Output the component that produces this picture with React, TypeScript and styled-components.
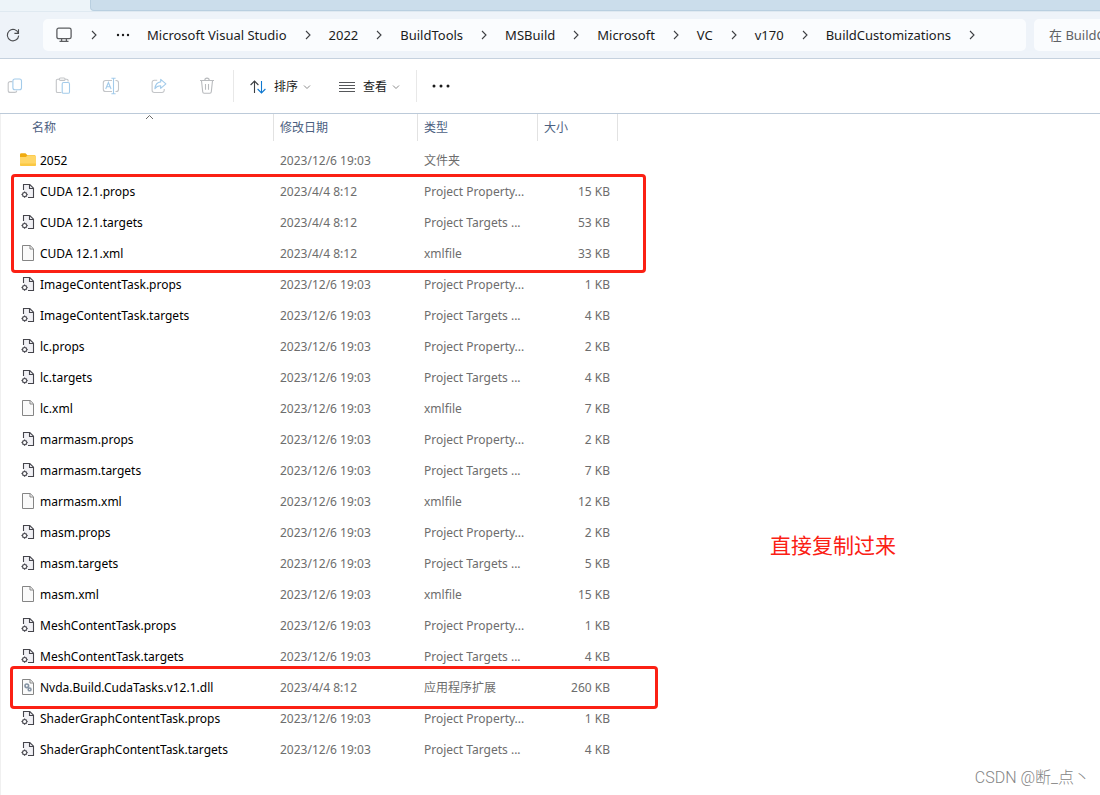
import React from "react";
import styled, { createGlobalStyle } from "styled-components";

const GlobalStyle = createGlobalStyle`
  * { box-sizing: border-box; }
  body {
    margin: 0;
    background: #fff;
    color: #1b1b1b;
    font-family: "Noto Sans", "Noto Sans CJK SC", sans-serif;
    font-size: 13px;
    overflow-x: hidden;
  }
  button, input { font: inherit; color: inherit; }
`;

const Window = styled.div`
  display: flex;
  flex-direction: column;
  min-height: 100vh;
`;

const TabStrip = styled.div`
  display: flex;
  height: 12px;
  background: #edf4f9;
  border-bottom: 1px solid #dfe9f1;
`;

const ActiveTab = styled.div`
  flex: 0 0 90px;
`;

const InactiveTabs = styled.div`
  flex: 1;
  border: 1px solid #b9cfe0;
  border-width: 0 0 1px 1px;
  border-bottom-left-radius: 4px;
  background: #cbddeb;
`;

const NavBar = styled.nav`
  display: flex;
  align-items: center;
  height: 47px;
  background: #eef3f9;
  border-bottom: 1px solid #c5d1de;
`;

const RefreshButton = styled.button`
  display: flex;
  flex: 0 0 43px;
  padding: 0 0 0 5px;
  border: 0;
  background: none;
`;

const AddressBar = styled.ol`
  display: flex;
  flex: 1;
  align-items: center;
  min-width: 0;
  height: 32px;
  margin: 0 8px 0 0;
  padding: 0 0 0 12px;
  border-radius: 5px;
  background: #fafcfe;
  list-style: none;
  overflow: hidden;
`;

const Crumb = styled.li`
  display: flex;
  flex: none;
  align-items: center;
`;

const CrumbLink = styled.a`
  color: inherit;
  line-height: 20px;
  text-decoration: none;
  white-space: nowrap;
`;

const CrumbIcon = styled.button`
  display: flex;
  padding: 0;
  border: 0;
  background: none;
`;

const MoreButton = styled(CrumbIcon)`
  margin-right: 15px;
`;

const CrumbChevron = styled.span<{ $width: number }>`
  display: flex;
  justify-content: center;
  width: ${(p) => p.$width}px;
`;

const SearchBox = styled.input`
  flex: 0 0 66px;
  width: 66px;
  height: 32px;
  padding: 0 0 0 15px;
  border: 0;
  border-radius: 5px 0 0 5px;
  background: #fafcfe;
  outline: 0;
  &::placeholder { color: #5f6266; opacity: 1; }
`;

const Toolbar = styled.div`
  display: flex;
  align-items: center;
  height: 55px;
  border-bottom: 1px solid #bccad9;
`;

const IconTools = styled.div`
  display: flex;
  align-items: center;
  gap: 18px;
  margin-right: 11px;
`;

const IconButton = styled.button<{ $width?: number }>`
  display: flex;
  justify-content: center;
  width: ${(p) => p.$width ?? 30}px;
  padding: 0;
  border: 0;
  background: none;
`;

const MenuButton = styled.button`
  display: flex;
  align-items: center;
  padding: 0 14px;
  border: 0;
  background: none;
  font-size: 12px;
  line-height: 20px;
`;

const MenuLabel = styled.span`
  margin: 0 5px 0 8px;
`;

const Divider = styled.span`
  width: 1px;
  height: 32px;
  margin: 0 2px 0 0;
  background: #e8e8e8;
`;

const MenuGroup = styled.div`
  display: flex;
  margin-right: 2px;
  padding-top: 1px;
`;

const Content = styled.main`
  display: flex;
  flex: 1;
  align-items: flex-start;
  border-left: 1px solid #f0f0f0;
`;

const FilePane = styled.div`
  position: relative;
  flex: 0 0 617px;
`;

const FileTable = styled.table`
  width: 100%;
  table-layout: fixed;
  border-collapse: collapse;
`;

const HeadCell = styled.th`
  height: 31px;
  padding: 0;
  font-weight: 400;
  text-align: left;
  vertical-align: top;
`;

const HeadLabel = styled.div<{ $first?: boolean; $last?: boolean }>`
  position: relative;
  height: 27px;
  padding-left: ${(p) => (p.$first ? 31 : 6)}px;
  border-left: ${(p) => (p.$first ? 0 : 1)}px solid #e2e2e2;
  border-right: ${(p) => (p.$last ? 1 : 0)}px solid #e2e2e2;
  color: #4c607f;
  font-size: 12px;
  line-height: 27px;
`;

const SortMark = styled.svg`
  position: absolute;
  top: 0;
  left: 50%;
  margin-left: 8px;
`;

const Cell = styled.td<{ $right?: boolean }>`
  height: 31px;
  padding: ${(p) => (p.$right ? "0 8px 0 0" : "0 0 0 7px")};
  color: #6d6d6d;
  font-size: 12px;
  line-height: 20px;
  text-align: ${(p) => (p.$right ? "right" : "left")};
  white-space: nowrap;
`;

const NameCell = styled(Cell)`
  padding-left: 19px;
  color: #000;
`;

const FileName = styled.div`
  display: flex;
  align-items: center;
  gap: 4px;
`;

const Highlight = styled.div<{ $top: number; $left: number; $right: number; $height: number }>`
  position: absolute;
  top: ${(p) => p.$top}px;
  left: ${(p) => p.$left}px;
  right: ${(p) => p.$right}px;
  height: ${(p) => p.$height}px;
  border: 3px solid #fb2014;
  border-radius: 4px;
  pointer-events: none;
`;

const Note = styled.p`
  margin: 415px 0 0 152px;
  color: #fb2014;
  font-family: "Noto Sans CJK SC", sans-serif;
  font-size: 21px;
  line-height: 30px;
  white-space: nowrap;
`;

const Watermark = styled.footer`
  padding: 0 10px 5px 0;
  border-left: 1px solid #f0f0f0;
  color: #858585;
  font-family: Roboto, "Noto Sans CJK SC", sans-serif;
  font-size: 16px;
  font-weight: 300;
  line-height: 24px;
  text-align: right;
`;

const Chevron = ({ dir }: { dir: "right" | "down" }) =>
  dir === "right" ? (
    <svg width="6" height="10" viewBox="0 0 6 10" fill="none" stroke="#3f4145" strokeWidth="1.1">
      <path d="M1 1 5 5 1 9" />
    </svg>
  ) : (
    <svg width="8" height="6" viewBox="0 0 8 6" fill="none" stroke="#8b8b8b" strokeWidth="1">
      <path d="M1 1.5 4 4.5 7 1.5" />
    </svg>
  );

const Dots = ({ step, r }: { step: number; r: number }) => (
  <svg width="18" height="4" viewBox="0 0 18 4" fill="#1b1b1b">
    {[-1, 0, 1].map((i) => (
      <circle key={i} cx={9 + i * step} cy="2" r={r} />
    ))}
  </svg>
);

const RefreshIcon = () => (
  <svg width="16" height="16" viewBox="0 0 16 16" fill="none" stroke="#4b4d50" strokeWidth="1.1">
    <path d="M13.4 6.2A5.7 5.7 0 1 0 13.7 8.6" />
    <path d="M13.5 2.2V6.4H9.4" />
  </svg>
);

const MonitorIcon = () => (
  <svg width="18" height="16" viewBox="0 0 18 16" fill="none" stroke="#5b5d60" strokeWidth="1.3">
    <rect x="1.9" y="1.1" width="14.2" height="10.6" rx="1.8" />
    <path d="M6.6 11.7V14.2M11.4 11.7V14.2M4.5 14.4H13.5" />
  </svg>
);

const GRAY = "#c3c5c8";
const BLUE = "#a3cbea";

const CopyIcon = () => (
  <svg width="16" height="16" viewBox="0 0 16 16" fill="none" strokeWidth="1.1">
    <path d="M5.4 3.6H3.2A2 2 0 0 0 1.2 5.6V12.4A2 2 0 0 0 3.2 14.4H7.8A2 2 0 0 0 9.8 12.6" stroke={GRAY} />
    <rect x="5.9" y="1" width="8.6" height="10.8" rx="2" stroke={BLUE} />
  </svg>
);

const PasteIcon = () => (
  <svg width="16" height="18" viewBox="0 0 16 18" fill="none" strokeWidth="1.1">
    <path d="M6.5 15.5H2.6A1.3 1.3 0 0 1 1.3 14.2V3.6A1.3 1.3 0 0 1 2.6 2.3H4.2M10.2 2.3H11.8A1.3 1.3 0 0 1 13.1 3.6V4.6" stroke={GRAY} />
    <rect x="4.3" y="1" width="5.8" height="2.4" rx="1.2" stroke={GRAY} />
    <rect x="7.2" y="5.5" width="7.3" height="10.8" rx="1.4" stroke={BLUE} />
  </svg>
);

const RenameIcon = () => (
  <svg width="18" height="18" viewBox="0 0 18 18" fill="none" strokeWidth="1.1">
    <path d="M10 3.5H3.6A2.3 2.3 0 0 0 1.3 5.8V12.2A2.3 2.3 0 0 0 3.6 14.5H10M13.5 3.5H14.2A2.3 2.3 0 0 1 16.5 5.8V12.2A2.3 2.3 0 0 1 14.2 14.5H13.5" stroke={GRAY} />
    <path d="M3.7 12 6.4 5.5 9.1 12M4.7 9.8H8.1M11.5 1.3V16.7M9.4 1.3H13.6M9.4 16.7H13.6" stroke={BLUE} />
  </svg>
);

const ShareIcon = () => (
  <svg width="16" height="16" viewBox="0 0 16 16" fill="none" strokeWidth="1.1" strokeLinejoin="round">
    <path d="M6.2 2.3H3.3A2.2 2.2 0 0 0 1.1 4.5V12.3A2.2 2.2 0 0 0 3.3 14.5H11A2.2 2.2 0 0 0 13.2 12.3V11" stroke={GRAY} />
    <path d="M9.7 1.4 14.9 5.8 9.7 10.3V7.8C7 7.8 5.3 8.7 3.9 10.7C4.3 7 6.2 4.2 9.7 3.9Z" stroke={BLUE} />
  </svg>
);

const TrashIcon = () => (
  <svg width="16" height="18" viewBox="0 0 16 18" fill="none" stroke="#b9bbbe" strokeWidth="1.1">
    <path d="M1 3.5H15M5.8 3.3A2.2 2.2 0 0 1 10.2 3.3M2.5 3.7 3.7 14.8A1.5 1.5 0 0 0 5.2 16.2H10.8A1.5 1.5 0 0 0 12.3 14.8L13.5 3.7M6.5 7V12.8M9.5 7V12.8" />
  </svg>
);

const SortIcon = () => (
  <svg width="16" height="14" viewBox="0 0 16 14" fill="none" strokeWidth="1.1">
    <path d="M4.5 13V1.2M.6 5 4.5 1.1 8.4 5" stroke="#3d3f42" />
    <path d="M11.5 1V12.8M7.6 9 11.5 12.9 15.4 9" stroke="#0f78d0" />
  </svg>
);

const ViewIcon = () => (
  <svg width="16" height="12" viewBox="0 0 16 12" stroke="#55575a" strokeWidth="1">
    <path d="M0 1.5H16M0 4.5H16M0 7.5H16M0 10.5H16" />
  </svg>
);

type Kind = "folder" | "project" | "plain" | "library";

const FileIcon = ({ kind }: { kind: Kind }) => (
  <svg width="16" height="17" viewBox="0 0 16 17" fill="none">
    {kind === "folder" && (
      <>
        <path d="M0 2.5A1.3 1.3 0 0 1 1.3 1.2H5.5L7.2 3H15V8H0Z" fill="#f0ab10" />
        <path d="M0 5H6L7.5 3.3H14.8A1.2 1.2 0 0 1 16 4.5V12.7A1.3 1.3 0 0 1 14.7 14H1.3A1.3 1.3 0 0 1 0 12.7Z" fill="#ffd667" />
        <path d="M0 11.5V12.7A1.3 1.3 0 0 0 1.3 14H14.7A1.3 1.3 0 0 0 16 12.7V11.5Z" fill="#fbc843" />
      </>
    )}
    {kind === "project" && (
      <>
        <path d="M3.5 1.5H10L13.5 5V14.5H3.5Z" fill="#f1f1f5" />
        <path d="M3.5 7V1.5H9.8L13.5 5.2V14.5H8M9.5 1.5V5.5H13.5" stroke="#45454c" strokeWidth="1.1" />
        <path d="M4.6 8.2 8 11.6 4.6 15 1.2 11.6Z" fill="#4a4a51" />
        <path d="M2.6 9.6 6.6 13.6M6.6 9.6 2.6 13.6" stroke="#4a4a51" strokeWidth="1.1" />
        <circle cx="4.6" cy="11.6" r="1.5" fill="#fff" />
      </>
    )}
    {(kind === "plain" || kind === "library") && (
      <path d="M2.5 .5H10.2L13.5 3.8V15.5H2.5ZM10 .7V4H13.3" fill="#fafafa" stroke="#858585" />
    )}
    {kind === "library" && (
      <g stroke="#8593a3" strokeWidth="1.6">
        <circle cx="6.8" cy="6.8" r="1.8" />
        <circle cx="9.6" cy="10.4" r="1.4" />
      </g>
    )}
  </svg>
);

const PROPS = "Project Property...";
const TARGETS = "Project Targets ...";
const DEC = "2023/12/6 19:03";
const APR = "2023/4/4 8:12";

const files: [Kind, string, string, string, string][] = [
  ["folder", "2052", DEC, "文件夹", ""],
  ["project", "CUDA 12.1.props", APR, PROPS, "15 KB"],
  ["project", "CUDA 12.1.targets", APR, TARGETS, "53 KB"],
  ["plain", "CUDA 12.1.xml", APR, "xmlfile", "33 KB"],
  ["project", "ImageContentTask.props", DEC, PROPS, "1 KB"],
  ["project", "ImageContentTask.targets", DEC, TARGETS, "4 KB"],
  ["project", "lc.props", DEC, PROPS, "2 KB"],
  ["project", "lc.targets", DEC, TARGETS, "4 KB"],
  ["plain", "lc.xml", DEC, "xmlfile", "7 KB"],
  ["project", "marmasm.props", DEC, PROPS, "2 KB"],
  ["project", "marmasm.targets", DEC, TARGETS, "7 KB"],
  ["plain", "marmasm.xml", DEC, "xmlfile", "12 KB"],
  ["project", "masm.props", DEC, PROPS, "2 KB"],
  ["project", "masm.targets", DEC, TARGETS, "5 KB"],
  ["plain", "masm.xml", DEC, "xmlfile", "15 KB"],
  ["project", "MeshContentTask.props", DEC, PROPS, "1 KB"],
  ["project", "MeshContentTask.targets", DEC, TARGETS, "4 KB"],
  ["library", "Nvda.Build.CudaTasks.v12.1.dll", APR, "应用程序扩展", "260 KB"],
  ["project", "ShaderGraphContentTask.props", DEC, PROPS, "1 KB"],
  ["project", "ShaderGraphContentTask.targets", DEC, TARGETS, "4 KB"],
];

const crumbs = [
  "Microsoft Visual Studio",
  "2022",
  "BuildTools",
  "MSBuild",
  "Microsoft",
  "VC",
  "v170",
  "BuildCustomizations",
];

const tools = [
  { label: "复制", icon: <CopyIcon /> },
  { label: "粘贴", icon: <PasteIcon /> },
  { label: "重命名", icon: <RenameIcon /> },
  { label: "共享", icon: <ShareIcon /> },
  { label: "删除", icon: <TrashIcon /> },
];

export default function App() {
  return (
    <>
      <GlobalStyle />
      <Window>
        <TabStrip>
          <ActiveTab />
          <InactiveTabs />
        </TabStrip>
        <NavBar>
          <RefreshButton aria-label="刷新">
            <RefreshIcon />
          </RefreshButton>
          <AddressBar>
            <Crumb>
              <CrumbIcon aria-label="此电脑">
                <MonitorIcon />
              </CrumbIcon>
              <CrumbChevron $width={41}>
                <Chevron dir="right" />
              </CrumbChevron>
            </Crumb>
            <Crumb>
              <MoreButton aria-label="更多位置">
                <Dots step={5} r={1.2} />
              </MoreButton>
            </Crumb>
            {crumbs.map((name) => (
              <Crumb key={name}>
                <CrumbLink href="#">{name}</CrumbLink>
                <CrumbChevron $width={42}>
                  <Chevron dir="right" />
                </CrumbChevron>
              </Crumb>
            ))}
          </AddressBar>
          <SearchBox type="text" aria-label="搜索" placeholder="在 BuildCustomizations 中搜索" />
        </NavBar>
        <Toolbar>
          <IconTools>
            {tools.map((t) => (
              <IconButton key={t.label} aria-label={t.label}>
                {t.icon}
              </IconButton>
            ))}
          </IconTools>
          <Divider />
          <MenuGroup>
            <MenuButton>
              <SortIcon />
              <MenuLabel>排序</MenuLabel>
              <Chevron dir="down" />
            </MenuButton>
            <MenuButton>
              <ViewIcon />
              <MenuLabel>查看</MenuLabel>
              <Chevron dir="down" />
            </MenuButton>
          </MenuGroup>
          <Divider />
          <IconButton $width={44} aria-label="查看更多">
            <Dots step={7} r={1.5} />
          </IconButton>
        </Toolbar>
        <Content>
          <FilePane>
            <FileTable>
              <colgroup>
                <col />
                <col width="144" />
                <col width="120" />
                <col width="81" />
              </colgroup>
              <thead>
                <tr>
                  <HeadCell>
                    <HeadLabel $first>
                      名称
                      <SortMark width="9" height="6" viewBox="0 0 9 6" fill="none" stroke="#6b6b6b">
                        <path d="M1 5 4.5 1.5 8 5" />
                      </SortMark>
                    </HeadLabel>
                  </HeadCell>
                  <HeadCell>
                    <HeadLabel>修改日期</HeadLabel>
                  </HeadCell>
                  <HeadCell>
                    <HeadLabel>类型</HeadLabel>
                  </HeadCell>
                  <HeadCell>
                    <HeadLabel $last>大小</HeadLabel>
                  </HeadCell>
                </tr>
              </thead>
              <tbody>
                {files.map(([kind, name, date, type, size]) => (
                  <tr key={name}>
                    <NameCell>
                      <FileName>
                        <FileIcon kind={kind} />
                        {name}
                      </FileName>
                    </NameCell>
                    <Cell>{date}</Cell>
                    <Cell>{type}</Cell>
                    <Cell $right>{size}</Cell>
                  </tr>
                ))}
              </tbody>
            </FileTable>
            <Highlight $top={60} $left={10} $right={-28} $height={99} />
            <Highlight $top={552} $left={9} $right={-40} $height={43} />
          </FilePane>
          <Note>直接复制过来</Note>
        </Content>
        <Watermark>CSDN @断_点丶</Watermark>
      </Window>
    </>
  );
}
